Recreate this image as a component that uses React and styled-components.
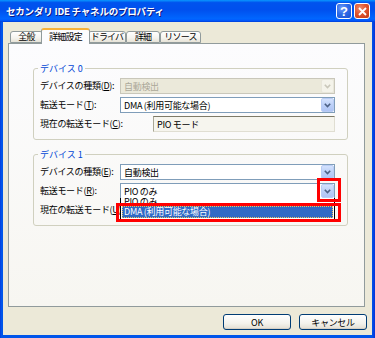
import React from "react";
import styled, { createGlobalStyle, css } from "styled-components";

const GlobalStyle = createGlobalStyle`
  html, body {
    margin: 0;
    padding: 0;
    background: #ffffff;
  }
  body {
    font-family: "Noto Sans CJK JP", "Noto Sans", sans-serif;
    font-size: 9px;
  }
`;

// screenshot is a scaled-down XP dialog, so the UI font ends up around 9px
const uiText = css`
  font-family: "Noto Sans CJK JP", sans-serif;
  font-size: 9px;
  letter-spacing: -0.3px;
`;

function Chevron({ color = "#4D6185" }) {
  return (
    <svg width="7" height="5" viewBox="0 0 7 5">
      <path d="M0.8 0.8 L3.5 3.6 L6.2 0.8" fill="none" stroke={color} strokeWidth="1.6" />
    </svg>
  );
}

function Combo({ value, disabled, children }) {
  return (
    <ComboBox $disabled={disabled}>
      <span>{value}</span>
      <ArrowButton $disabled={disabled}>
        <Chevron color={disabled ? "#C9C7BA" : "#4D6185"} />
      </ArrowButton>
      {children}
    </ComboBox>
  );
}

function App() {
  return (
    <>
      <GlobalStyle />
      <Window>
        <TitleBar>
          <Title>セカンダリ IDE チャネルのプロパティ</Title>
          <CaptionButton $kind="help">?</CaptionButton>
          <CaptionButton $kind="close">
            <svg width="9" height="9" viewBox="0 0 9 9">
              <path d="M1 1 L8 8 M8 1 L1 8" stroke="#fff" strokeWidth="1.8" />
            </svg>
          </CaptionButton>
        </TitleBar>
        <Body>
          <TabStrip>
            <Tab $w={33}>全般</Tab>
            <Tab $w={49} $active>詳細設定</Tab>
            <Tab $w={38}>ドライバ</Tab>
            <Tab $w={34}>詳細</Tab>
            <Tab $w={41}>リソース</Tab>
          </TabStrip>
          <Panel>
            <Group>
              <Legend>デバイス 0</Legend>
              <Row $label={80}>
                <Label>デバイスの種類(<u>D</u>):</Label>
                <Combo value="自動検出" disabled />
              </Row>
              <Row $label={80}>
                <Label>転送モード(<u>T</u>):</Label>
                <Combo value="DMA (利用可能な場合)" />
              </Row>
              <Row $label={113}>
                <Label>現在の転送モード(<u>C</u>):</Label>
                <ReadOnlyBox>PIO モード</ReadOnlyBox>
              </Row>
            </Group>
            <Group $second>
              <Legend>デバイス 1</Legend>
              <Row $label={80}>
                <Label>デバイスの種類(<u>E</u>):</Label>
                <Combo value="自動検出" />
              </Row>
              <Row $label={80}>
                <Label>転送モード(<u>R</u>):</Label>
                <Combo value="PIO のみ">
                  <DropList>
                    <ListItem $clip>PIO のみ</ListItem>
                    <ListItem $selected>DMA (利用可能な場合)</ListItem>
                  </DropList>
                </Combo>
              </Row>
              <Row $label={113}>
                <Label>現在の転送モード(<u>U</u>):</Label>
                <ReadOnlyBox>PIO モード</ReadOnlyBox>
              </Row>
            </Group>
          </Panel>
          <ButtonRow>
            <Button>OK</Button>
            <Button>キャンセル</Button>
          </ButtonRow>
        </Body>
        <Marker $x={317} $y={178} $w={24} $h={24} />
        <Marker $x={116} $y={203} $w={225} $h={19} />
      </Window>
    </>
  );
}

const Window = styled.div`
  position: relative;
  width: 375px;
  height: 338px;
  display: flex;
  flex-direction: column;
  background: linear-gradient(90deg, #0831D9 0px, #0055EA 1px, #0055EA 372px, #0831D9 375px);
  box-sizing: border-box;
`;

const TitleBar = styled.div`
  height: 22px;
  flex: none;
  display: flex;
  align-items: center;
  gap: 2px;
  padding: 0 5px 0 6px;
  background: linear-gradient(
    180deg,
    #0997ff 0%,
    #0053ee 12%,
    #0050ee 45%,
    #0066ff 85%,
    #005bff 92%,
    #003dd7 100%
  );
`;

const Title = styled.div`
  flex: 1;
  font-family: "Noto Sans CJK JP", sans-serif;
  color: #ffffff;
  font-weight: 700;
  font-size: 9.5px;
  letter-spacing: -0.2px;
  text-shadow: 1px 1px 0 #0a1883;
  white-space: nowrap;
`;

const CaptionButton = styled.div`
  width: 14px;
  height: 14px;
  border: 1px solid #ffffff;
  border-radius: 3px;
  display: flex;
  align-items: center;
  justify-content: center;
  color: #ffffff;
  font-family: "Liberation Sans", sans-serif;
  font-weight: 700;
  font-size: 13px;
  background: ${(p) =>
    p.$kind === "close"
      ? "radial-gradient(circle at 35% 30%, #f08a6a 0%, #e0552f 45%, #c23a16 100%)"
      : "radial-gradient(circle at 35% 30%, #6f9cf8 0%, #2f6ce8 45%, #1a4fd0 100%)"};
`;

const Body = styled.div`
  flex: 1;
  margin: 0 3px 3px;
  padding: 6px 5px 0 5px;
  background: #ece9d8;
  display: flex;
  flex-direction: column;
`;

const TabStrip = styled.div`
  display: flex;
  align-items: flex-end;
  height: 16px;
  padding-left: 2px;
  margin-bottom: -1px;
  position: relative;
  z-index: 2;
`;

const Tab = styled.div`
  ${uiText};
  letter-spacing: -0.8px;
  width: ${(p) => p.$w}px;
  box-sizing: border-box;
  height: ${(p) => (p.$active ? 16 : 12)}px;
  margin-bottom: ${(p) => (p.$active ? 0 : 1)}px;
  margin-left: ${(p) => (p.$active ? -2 : 0)}px;
  margin-right: ${(p) => (p.$active ? -2 : 0)}px;
  border: 1px solid #919b9c;
  border-bottom: ${(p) => (p.$active ? "none" : "1px solid #919b9c")};
  border-top: ${(p) => (p.$active ? "2px solid #f7b13a" : "1px solid #919b9c")};
  border-radius: 3px 3px 0 0;
  background: ${(p) =>
    p.$active ? "#fcfcfe" : "linear-gradient(180deg, #ffffff 0%, #f4f3ee 60%, #e6e3d7 100%)"};
  display: flex;
  align-items: center;
  justify-content: center;
  line-height: 12px;
  color: #000000;
  white-space: nowrap;
  position: relative;
  z-index: ${(p) => (p.$active ? 3 : 1)};
`;

const Panel = styled.div`
  flex: 1;
  margin-right: 2px;
  border: 1px solid #919b9c;
  background: linear-gradient(180deg, #fcfcfe 0%, #f7f6f1 100%);
  padding: 18px 16px 0 24px;
  display: flex;
  flex-direction: column;
`;

const Group = styled.fieldset`
  margin: ${(p) => (p.$second ? "8px 0 0" : "0")};
  padding: 3px 12px 7px 6px;
  border: 1px solid #d0d0bf;
  border-radius: 3px;
  display: flex;
  flex-direction: column;
  gap: 3px;
  min-width: 0;
`;

const Legend = styled.legend`
  ${uiText};
  letter-spacing: 0;
  padding: 0 2px;
  margin-left: -2px;
  color: #0046d5;
  line-height: 13px;
`;

const Row = styled.div`
  display: grid;
  grid-template-columns: ${(p) => p.$label}px 1fr;
  align-items: center;
  height: 16px;
`;

const Label = styled.div`
  ${uiText};
  white-space: nowrap;
  color: #000000;
  line-height: 16px;

  u {
    text-decoration: underline;
  }
`;

const ComboBox = styled.div`
  ${uiText};
  position: relative;
  height: 16px;
  box-sizing: border-box;
  border: 1px solid ${(p) => (p.$disabled ? "#c9c7ba" : "#7f9db9")};
  background: ${(p) => (p.$disabled ? "#ebe9da" : "#ffffff")};
  color: ${(p) => (p.$disabled ? "#aca899" : "#000000")};
  display: flex;
  align-items: center;
  padding-left: 3px;
  white-space: nowrap;
`;

const ArrowButton = styled.div`
  margin-left: auto;
  width: 13px;
  height: 14px;
  box-sizing: border-box;
  border: 1px solid ${(p) => (p.$disabled ? "#e8e6da" : "#b9ccf5")};
  border-radius: 2px;
  background: ${(p) =>
    p.$disabled
      ? "#f4f3ea"
      : "linear-gradient(180deg, #d4e2fd 0%, #bcd0f8 50%, #afc4f4 100%)"};
  display: flex;
  align-items: center;
  justify-content: center;
`;

const ReadOnlyBox = styled.div`
  ${uiText};
  height: 16px;
  box-sizing: border-box;
  border: 1px solid #e0ded2;
  border-top-color: #7d7a68;
  border-left-color: #a9a795;
  background: #f6f5ee;
  padding-left: 3px;
  display: flex;
  align-items: center;
`;

const DropList = styled.div`
  position: absolute;
  top: 100%;
  left: -1px;
  right: -1px;
  z-index: 5;
  border: 1px solid #000000;
  border-top: none;
  background: #ffffff;
  padding: 0 1px 2px;
`;

const ListItem = styled.div`
  ${uiText};
  height: ${(p) => (p.$clip ? 8 : 12)}px;
  line-height: ${(p) => (p.$clip ? 8 : 12)}px;
  overflow: hidden;
  padding-left: 2px;
  white-space: nowrap;
  background: ${(p) => (p.$selected ? "#316ac5" : "transparent")};
  color: ${(p) => (p.$selected ? "#ffffff" : "#000000")};
  outline: ${(p) => (p.$selected ? "1px dotted #e8c060" : "none")};
  outline-offset: -1px;
`;

const ButtonRow = styled.div`
  display: flex;
  justify-content: flex-end;
  gap: 8px;
  margin: 7px 0 5px;
`;

const Button = styled.div`
  ${uiText};
  width: 68px;
  height: 16px;
  box-sizing: border-box;
  border: 1px solid #003c74;
  border-radius: 3px;
  background: linear-gradient(180deg, #ffffff 0%, #f3f2ec 60%, #e3ded2 100%);
  box-shadow: inset 0 -1px 0 #d6d0c5;
  display: flex;
  align-items: center;
  justify-content: center;
  color: #000000;
`;

const Marker = styled.div`
  position: absolute;
  left: ${(p) => p.$x}px;
  top: ${(p) => p.$y}px;
  width: ${(p) => p.$w}px;
  height: ${(p) => p.$h}px;
  box-sizing: border-box;
  border: 3px solid #ff0000;
  z-index: 10;
  pointer-events: none;
`;

export default App;
